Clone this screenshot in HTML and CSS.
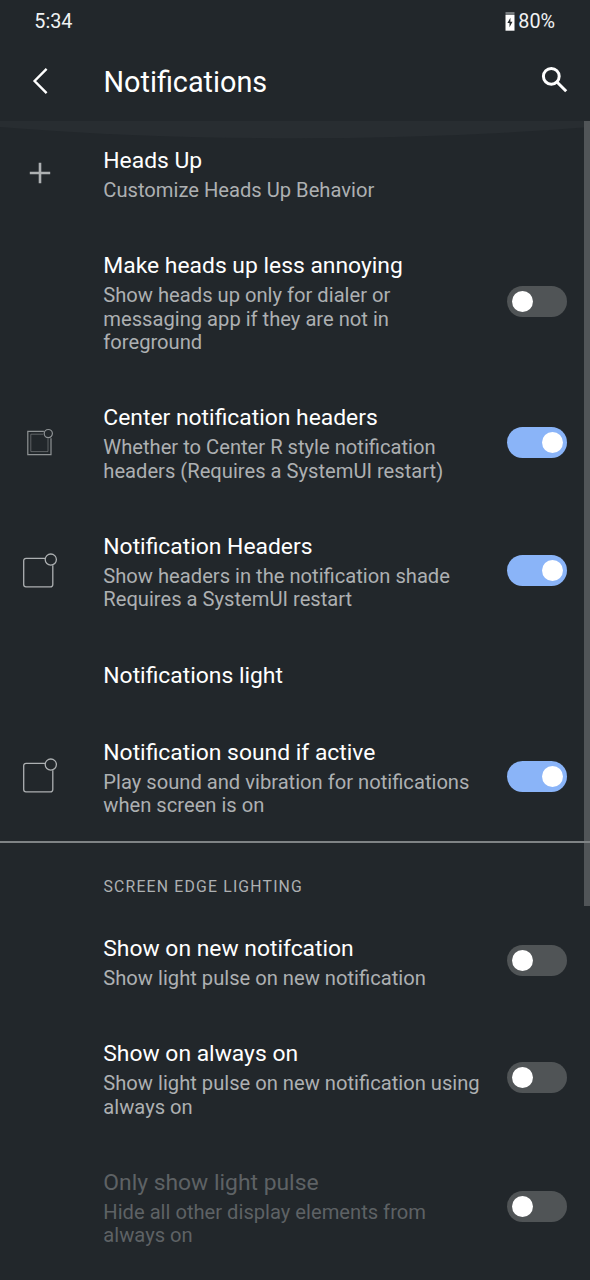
FILE: index.html
```html
<!DOCTYPE html>
<html lang="en">
<head>
<meta charset="utf-8">
<title>Notifications</title>
<link rel="stylesheet" href="styles.css">
</head>
<body>
<svg class="defs" aria-hidden="true">
  <symbol id="bubble" viewBox="0 0 36 36">
    <path d="M23.2 5.4H4a2.3 2.3 0 0 0-2.3 2.3v23.9a2.3 2.3 0 0 0 2.3 2.3h24.5a2.3 2.3 0 0 0 2.3-2.3V12.2"/>
    <circle cx="28.8" cy="6.6" r="5.6"/>
  </symbol>
</svg>
<div class="screen">
  <div class="status">
    <span class="clock">5:34</span>
    <span class="battery">
      <svg class="battery-icon" viewBox="0 0 10 19"><path class="battery-empty" d="M.5 0h9v3h-9z"/><path class="battery-fill" d="M.5 3h9v15.7h-9z"/><path class="battery-bolt" d="M5.4 5.8 2.4 11h2.1v4.2l3-5.4H5.4z"/></svg>
      <span>80%</span>
    </span>
  </div>
  <header class="bar">
    <svg class="back" viewBox="0 0 20 30"><path d="M16.6 2.9 4.6 15l12 12.1"/></svg>
    <h1 class="heading">Notifications</h1>
    <svg class="search" viewBox="0 0 28 28"><circle cx="10.3" cy="10.3" r="7.9"/><path d="m16.2 16.2 9 9"/></svg>
  </header>
  <main class="list">
    <svg class="glow" viewBox="0 0 590 18" preserveAspectRatio="none"><path d="M0 0H590V6Q450 17.3 295 17.3T0 6z"/></svg>
    <div class="scrollbar"></div>

    <div class="row">
      <div class="lead"><svg class="plus" viewBox="0 0 22 22"><path d="M11 .8v20.4M.8 11h20.4"/></svg></div>
      <div class="text"><div class="title">Heads Up</div><div class="summary">Customize Heads Up Behavior</div></div>
    </div>
    <div class="row">
      <div class="lead"></div>
      <div class="text"><div class="title">Make heads up less annoying</div><div class="summary">Show heads up only for dialer or<br>messaging app if they are not in<br>foreground</div></div>
      <div class="switch"></div>
    </div>
    <div class="row">
      <div class="lead"><svg class="center-icon" viewBox="0 0 28 28"><path d="M17.9 3.4H1.8v23.2H25V10.2"/><path class="inner" d="M17.2 6.2H4.8v17.4H22V10.4"/><circle cx="22.3" cy="5.6" r="4.1"/></svg></div>
      <div class="text"><div class="title">Center notification headers</div><div class="summary">Whether to Center R style notification<br>headers (Requires a SystemUI restart)</div></div>
      <div class="switch on"></div>
    </div>
    <div class="row">
      <div class="lead"><svg class="bubble"><use href="#bubble"/></svg></div>
      <div class="text"><div class="title">Notification Headers</div><div class="summary">Show headers in the notification shade<br>Requires a SystemUI restart</div></div>
      <div class="switch on"></div>
    </div>
    <div class="row">
      <div class="lead"></div>
      <div class="text"><div class="title">Notifications light</div></div>
    </div>
    <div class="row">
      <div class="lead"><svg class="bubble"><use href="#bubble"/></svg></div>
      <div class="text"><div class="title">Notification sound if active</div><div class="summary">Play sound and vibration for notifications<br>when screen is on</div></div>
      <div class="switch on"></div>
    </div>
    <div class="category">SCREEN EDGE LIGHTING</div>
    <div class="row">
      <div class="lead"></div>
      <div class="text"><div class="title">Show on new notifcation</div><div class="summary">Show light pulse on new notification</div></div>
      <div class="switch"></div>
    </div>
    <div class="row">
      <div class="lead"></div>
      <div class="text"><div class="title">Show on always on</div><div class="summary">Show light pulse on new notification using<br>always on</div></div>
      <div class="switch"></div>
    </div>
    <div class="row disabled">
      <div class="lead"></div>
      <div class="text"><div class="title">Only show light pulse</div><div class="summary">Hide all other display elements from<br>always on</div></div>
      <div class="switch"></div>
    </div>
  </main>
</div>
</body>
</html>
```
FILE: styles.css
```css
* { box-sizing: border-box; }
body {
  margin: 0;
  background: #22272b;
  color: #fff;
  font-family: Roboto, "Liberation Sans", sans-serif;
}
svg { display: block; fill: none; overflow: visible; }
symbol { overflow: visible; }
.defs { position: absolute; width: 0; height: 0; }
.screen { width: 590px; height: 1280px; overflow: hidden; display: flex; flex-direction: column; }

.status {
  height: 42px;
  flex: none;
  padding: 0 35px 0 34.3px;
  display: flex;
  justify-content: space-between;
  align-items: center;
  font-size: 19.8px;
  color: #f0f2f3;
}
.battery { display: flex; align-items: center; gap: 3px; }
.battery-icon { width: 10px; height: 19px; }
.battery-empty { fill: #74797c; }
.battery-fill { fill: #fff; }
.battery-bolt { fill: #22272b; }

.bar { height: 78.3px; flex: none; display: flex; align-items: center; padding: 0 21px 0 30px; }
.back { width: 20px; height: 30px; stroke: #fff; stroke-width: 2.4; }
.heading { margin: 2px 0 0 53.5px; font-size: 28.8px; font-weight: 400; line-height: 34px; flex: 1; }
.search { width: 28px; height: 28px; margin-bottom: 3px; stroke: #fff; stroke-width: 3; }

.list { position: relative; flex: none; }
.glow { position: absolute; top: 1px; left: 0; width: 590px; height: 18px; fill: #282d31; }
.scrollbar { position: absolute; top: .7px; right: 0; width: 6px; height: 785px; background: #515558; }

.row { display: flex; align-items: center; padding-right: 23px; }
.lead { width: 80px; flex: none; display: flex; justify-content: center; stroke: #adb0b2; }
.text { flex: 1; margin-left: 23.3px; padding: 26.5px 0 23.5px; white-space: nowrap; }
.title { font-size: 22.87px; line-height: 27px; }
.summary { margin-top: 5px; margin-bottom: -.3px; font-size: 20.16px; line-height: 23.5px; color: #adb0b2; }
.disabled .title { color: #5e6265; }
.disabled .summary { color: #5e6265; }

.plus { width: 22px; height: 22px; stroke-width: 2.6; }
.center-icon { width: 28px; height: 28px; stroke-width: 1.2; stroke: #8f9395; }
.inner { stroke-width: .8; opacity: .7; }
.bubble { width: 36px; height: 36px; stroke-width: 1.3; }

.switch {
  width: 60px;
  height: 31px;
  border-radius: 16px;
  background: #505456;
  padding: 0 4.5px;
  display: flex;
  align-items: center;
}
.switch::before { content: ""; width: 21px; height: 21px; border-radius: 50%; background: #fff; }
.switch.on { background: #8ab4f8; justify-content: flex-end; }

.category {
  position: relative;
  height: 67.5px;
  border-top: 2px solid #7f8385;
  padding: 32.5px 0 0 103.5px;
  font-size: 15.8px;
  line-height: 24px;
  letter-spacing: 1.18px;
  color: #adb0b2;
}
```
